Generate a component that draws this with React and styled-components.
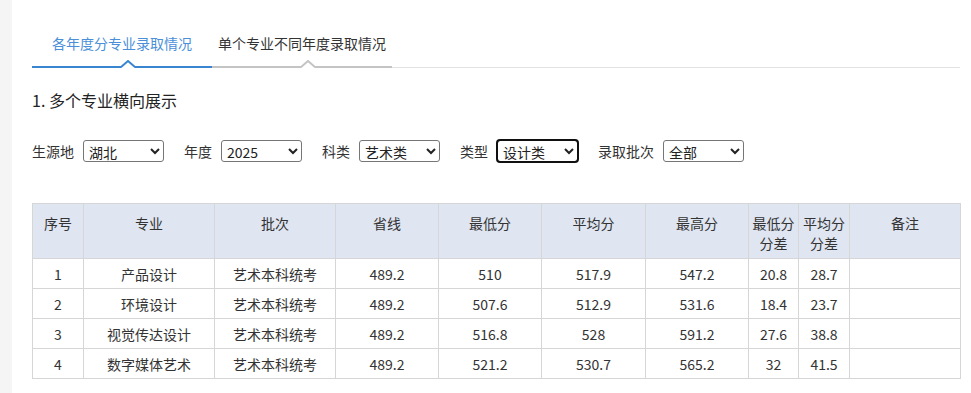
import React from "react";
import styled, { createGlobalStyle } from "styled-components";

const Global = createGlobalStyle`
  html, body { margin: 0; padding: 0; background: #f5f5f5; }
  body { font-family: "Microsoft YaHei", "Noto Sans CJK SC", "Noto Sans", sans-serif; color: #333; }
`;

const Page = styled.div`
  margin-left: 12px;
  min-height: 393px;
  background: #fff;
  padding: 19px 11px 0 20px;
  box-sizing: border-box;
`;

const Tabs = styled.div`
  display: flex;
  border-bottom: 1px solid #e2e2e2;
`;

const Tab = styled.div`
  position: relative;
  width: 180px;
  height: 47px;
  display: flex;
  align-items: center;
  justify-content: center;
  font-size: 14px;
  color: ${(p) => (p.$active ? "#4a8fd8" : "#333")};
  border-bottom: 2px solid ${(p) => (p.$active ? "#3a85d0" : "#c4c4c4")};
  margin-bottom: -1px;
  cursor: pointer;
`;

const CaretSvg = styled.svg`
  position: absolute;
  left: 89px;
  bottom: -2px;
`;

const Caret = ({ color }) => (
  <CaretSvg width="14" height="8" viewBox="0 0 14 8">
    <polygon points="0,8 7,1.5 14,8" fill="#fff" />
    <polyline points="0,7 7,1 14,7" fill="none" stroke={color} strokeWidth="2" />
  </CaretSvg>
);

const Heading = styled.h3`
  margin: 20px 0 0;
  font-size: 16px;
  line-height: 24px;
  font-weight: normal;
  color: #222;
`;

const Filters = styled.div`
  display: flex;
  align-items: center;
  margin-top: 28px;
  height: 22px;
`;

const Field = styled.label`
  display: flex;
  align-items: center;
  gap: 9px;
  margin-right: 20px;
  font-size: 14px;
  color: #333;
`;

const Select = styled.select`
  width: 81px;
  height: 22px;
  font-size: 14px;
  font-family: inherit;
  color: #222;
  border: 1px solid #767676;
  border-radius: 3px;
  background: #fff;
  padding: 0 0 0 1px;
  outline: ${(p) => (p.$focused ? "2px solid #101010" : "none")};
  outline-offset: -1px;
`;

const Table = styled.table`
  margin-top: 41px;
  width: 928px;
  border-collapse: collapse;
  table-layout: fixed;
  font-size: 14px;
  color: #333;
`;

const Th = styled.th`
  background: #dfe5f1;
  border: 1px solid #d6d6d6;
  height: 55px;
  vertical-align: top;
  padding: 9px 0 0;
  font-weight: normal;
  line-height: 20px;
  box-sizing: border-box;
`;

const Td = styled.td`
  border: 1px solid #d6d6d6;
  height: 30px;
  text-align: center;
  padding: 0;
  box-sizing: border-box;
`;

const columns = [
  { label: "序号", w: 51 },
  { label: "专业", w: 131 },
  { label: "批次", w: 121 },
  { label: "省线", w: 103 },
  { label: "最低分", w: 103 },
  { label: "平均分", w: 104 },
  { label: "最高分", w: 103 },
  { label: "最低分分差", w: 50 },
  { label: "平均分分差", w: 51 },
  { label: "备注", w: 111 },
];

const rows = [
  ["1", "产品设计", "艺术本科统考", "489.2", "510", "517.9", "547.2", "20.8", "28.7", ""],
  ["2", "环境设计", "艺术本科统考", "489.2", "507.6", "512.9", "531.6", "18.4", "23.7", ""],
  ["3", "视觉传达设计", "艺术本科统考", "489.2", "516.8", "528", "591.2", "27.6", "38.8", ""],
  ["4", "数字媒体艺术", "艺术本科统考", "489.2", "521.2", "530.7", "565.2", "32", "41.5", ""],
];

const filters = [
  { label: "生源地", value: "湖北", options: ["湖北"] },
  { label: "年度", value: "2025", options: ["2025", "2024"] },
  { label: "科类", value: "艺术类", options: ["艺术类"] },
  { label: "类型", value: "设计类", options: ["设计类"], focused: true },
  { label: "录取批次", value: "全部", options: ["全部"] },
];

export default function App() {
  return (
    <>
      <Global />
      <Page>
        <Tabs>
          <Tab $active>
            各年度分专业录取情况
            <Caret color="#3a85d0" />
          </Tab>
          <Tab>
            单个专业不同年度录取情况
            <Caret color="#c4c4c4" />
          </Tab>
        </Tabs>
        <Heading>1. 多个专业横向展示</Heading>
        <Filters>
          {filters.map((f) => (
            <Field key={f.label}>
              {f.label}
              <Select defaultValue={f.value} $focused={f.focused}>
                {f.options.map((o) => (
                  <option key={o}>{o}</option>
                ))}
              </Select>
            </Field>
          ))}
        </Filters>
        <Table>
          <colgroup>
            {columns.map((c) => (
              <col key={c.label} style={{ width: c.w }} />
            ))}
          </colgroup>
          <thead>
            <tr>
              {columns.map((c) => (
                <Th key={c.label}>{c.label}</Th>
              ))}
            </tr>
          </thead>
          <tbody>
            {rows.map((r) => (
              <tr key={r[0]}>
                {r.map((v, i) => (
                  <Td key={i}>{v}</Td>
                ))}
              </tr>
            ))}
          </tbody>
        </Table>
      </Page>
    </>
  );
}
